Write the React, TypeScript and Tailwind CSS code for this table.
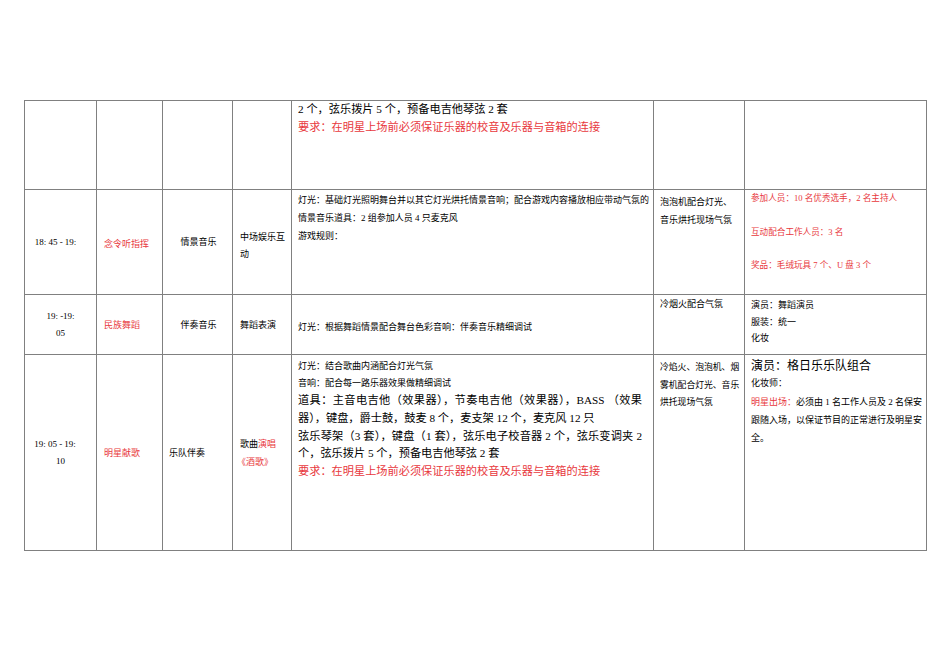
const red = "text-[#e8383d]";

function Lines({ items, className = "" }: { items: React.ReactNode[]; className?: string }) {
  return (
    <div className={className}>
      {items.map((t, i) => (
        <div key={i} className="whitespace-nowrap">
          {t}
        </div>
      ))}
    </div>
  );
}

export default function App() {
  const cell = "border border-[#808080] p-0";
  const top = `${cell} align-top`;
  const mid = `${cell} align-middle`;
  return (
    <div
      className="w-[950px] h-[672px] bg-white text-black"
      style={{ fontFamily: '"Liberation Serif", "Noto Sans CJK SC", serif' }}
    >
      <div className="pt-[100px] pl-[24px]">
        <table className="table-fixed border-collapse w-[902px]">
          <colgroup>
            <col className="w-[72px]" />
            <col className="w-[66px]" />
            <col className="w-[70px]" />
            <col className="w-[59px]" />
            <col className="w-[362px]" />
            <col className="w-[91px]" />
            <col className="w-[182px]" />
          </colgroup>
          <tbody>
            {/* row 1: tail of previous block */}
            <tr className="h-[89px]">
              <td className={top} />
              <td className={top} />
              <td className={top} />
              <td className={top} />
              <td className={top}>
                <div className="pl-[6px] -mt-[1px] text-[11.2px] leading-[18px]">
                  <div>2 个，弦乐拨片 5 个，预备电吉他琴弦 2 套</div>
                  <div className={red}>要求：在明星上场前必须保证乐器的校音及乐器与音箱的连接</div>
                </div>
              </td>
              <td className={top} />
              <td className={top} />
            </tr>

            {/* row 2 */}
            <tr className="h-[105px] text-[9px] leading-[17px]">
              <td className={`${mid} text-center`}>
                <div className="pr-[10px]">18: 45 - 19:</div>
              </td>
              <td className={mid}>
                <div className={`pl-[7px] pt-[5px] ${red}`}>念令听指挥</div>
              </td>
              <td className={`${mid} text-center`}>
                <div className="pl-[2px]">情景音乐</div>
              </td>
              <td className={mid}>
                <Lines className="pl-[7px] pt-[8px]" items={["中场娱乐互", "动"]} />
              </td>
              <td className={top}>
                <div className="pl-[6px] pt-[1px] leading-[18px]">
                  <div>灯光：基础灯光照明舞台并以其它灯光烘托情景音响；配合游戏内容播放相应带动气氛的</div>
                  <div>情景音乐道具：2 组参加人员 4 只麦克风</div>
                  <div>游戏规则：</div>
                </div>
              </td>
              <td className={top}>
                <Lines className="pl-[6px] pt-[3px] leading-[18px]" items={["泡泡机配合灯光、", "音乐烘托现场气氛"]} />
              </td>
              <td className={top}>
                <div className={`pl-[6px] flex flex-col gap-[16.5px] leading-[17px] text-[8.6px] ${red}`}>
                  <div>参加人员：10 名优秀选手，2 名主持人</div>
                  <div>互动配合工作人员：3 名</div>
                  <div>奖品：毛绒玩具 7 个、U 盘 3 个</div>
                </div>
              </td>
            </tr>

            {/* row 3 */}
            <tr className="h-[60px] text-[9px] leading-[17px]">
              <td className={`${mid} text-center`}>
                <Lines items={["19: -19:", "05"]} />
              </td>
              <td className={mid}>
                <div className={`pl-[7px] pt-[2px] ${red}`}>民族舞蹈</div>
              </td>
              <td className={`${mid} text-center`}>
                <div className="pl-[2px] pt-[2px]">伴奏音乐</div>
              </td>
              <td className={mid}>
                <div className="pl-[7px] pt-[2px]">舞蹈表演</div>
              </td>
              <td className={mid}>
                <div className="pl-[6px] pt-[5px]">灯光：根据舞蹈情景配合舞台色彩音响：伴奏音乐精细调试</div>
              </td>
              <td className={top}>
                <div className="pl-[6px] pt-[1px]">冷烟火配合气氛</div>
              </td>
              <td className={top}>
                <Lines className="pl-[6px] pt-[2px] leading-[16.5px]" items={["演员：舞蹈演员", "服装：统一", "化妆"]} />
              </td>
            </tr>

            {/* row 4 */}
            <tr className="h-[196px] text-[9px] leading-[17px]">
              <td className={`${mid} text-center`}>
                <div className="pr-[11px]">19: 05 - 19:</div>
                <div>10</div>
              </td>
              <td className={mid}>
                <div className={`pl-[7px] pt-[1px] ${red}`}>明星献歌</div>
              </td>
              <td className={mid}>
                <div className="pl-[6px] pt-[1px]">乐队伴奏</div>
              </td>
              <td className={mid}>
                <div className="pl-[7px] pt-[1px] leading-[18px]">
                  <div>
                    歌曲<span className={red}>演唱</span>
                  </div>
                  <div className={`${red} -ml-[3px]`}>《酒歌》</div>
                </div>
              </td>
              <td className={top}>
                <div className="pl-[6px] pr-[11px] pt-[3px]">
                  <div className="leading-[17px]">灯光：结合歌曲内涵配合灯光气氛</div>
                  <div className="leading-[17px]">音响：配合每一路乐器效果做精细调试</div>
                  <div className="text-[11.2px] leading-[17.8px]">
                    <div className="text-justify [text-align-last:justify]">
                      道具：主音电吉他（效果器），节奏电吉他（效果器），BASS （效果
                    </div>
                    <div>器），键盘，爵士鼓，鼓麦 8 个，麦支架 12 个，麦克风 12 只</div>
                    <div className="text-justify [text-align-last:justify]">
                      弦乐琴架（3 套），键盘（1 套），弦乐电子校音器 2 个，弦乐变调夹 2
                    </div>
                    <div>个，弦乐拨片 5 个，预备电吉他琴弦 2 套</div>
                    <div className={red}>要求：在明星上场前必须保证乐器的校音及乐器与音箱的连接</div>
                  </div>
                </div>
              </td>
              <td className={top}>
                <Lines
                  className="pl-[6px] pt-[4px] leading-[17.5px] text-[8.8px]"
                  items={["冷焰火、泡泡机、烟", "雾机配合灯光、音乐", "烘托现场气氛"]}
                />
              </td>
              <td className={top}>
                <div className="pl-[6px] pt-[2px]">
                  <div className="text-[12px] leading-[18px]">演员：格日乐乐队组合</div>
                  <div className="leading-[16px]">化妆师：</div>
                  <div className="leading-[18px] pt-[2px]">
                    <div>
                      <span className={red}>明星出场：</span>必须由 1 名工作人员及 2 名保安
                    </div>
                    <div>跟随入场，以保证节目的正常进行及明星安</div>
                    <div>全。</div>
                  </div>
                </div>
              </td>
            </tr>
          </tbody>
        </table>
      </div>
    </div>
  );
}
